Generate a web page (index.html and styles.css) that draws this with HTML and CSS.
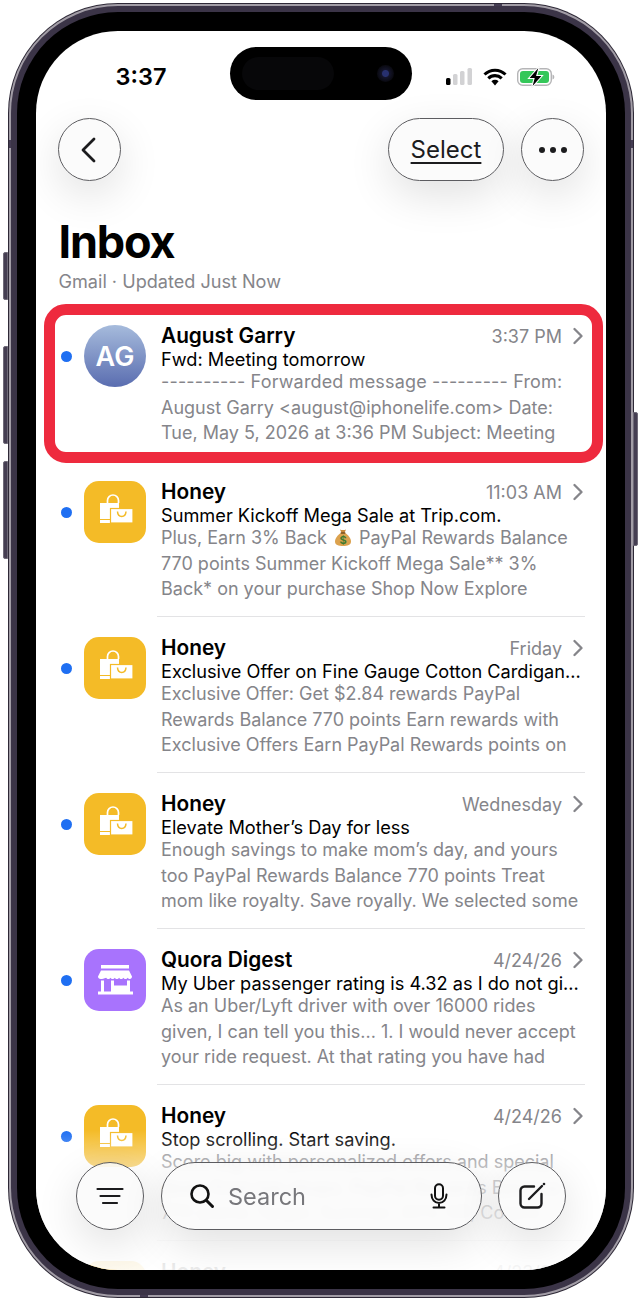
FILE: index.html
```html
<!DOCTYPE html>
<html lang="en">
<head>
<meta charset="utf-8">
<title>Inbox</title>
<link rel="stylesheet" href="styles.css">
</head>
<body>
<svg class="defs" width="0" height="0" aria-hidden="true">
  <defs>
    <symbol id="bags" viewBox="0 0 62 62">
      <path d="M23.500 22v-2.500a5.500 5.500 0 0 1 11 0V22" fill="none" stroke="#fff" stroke-width="1.700"/>
      <path d="M16 22h19v16H16z" fill="#fff"/>
      <rect x="16" y="39" width="12" height="3" fill="#fff"/>
      <rect x="26.500" y="27.500" width="22.500" height="14.500" fill="#fff" stroke="#f4bb27" stroke-width="1.200"/>
      <path d="M33.500 30.500c.3 6.500 8.200 6.500 8.500 0" fill="none" stroke="#f4bb27" stroke-width="1.500"/>
    </symbol>
    <symbol id="store" viewBox="0 0 62 62">
      <rect x="17" y="16" width="28" height="3.500" fill="#fff"/>
      <path d="M17 21.500h28l3 6c0 3-3.200 3-4.300 1.200-1 1.800-3.400 1.800-4.300 0-1 1.800-3.400 1.800-4.300 0-1 1.800-3.400 1.800-4.300 0-1 1.800-3.400 1.800-4.300 0-1 1.800-3.400 1.800-4.300 0C17.200 30.500 14 30.500 14 27.500z" fill="#fff"/>
      <path d="M17 31.500h3v11h7v-11h3v5h13v-5h3v11h3v3H14v-3h3z" fill="#fff"/>
    </symbol>
    <symbol id="chev" viewBox="0 0 12 18">
      <path d="M3.500 2l7 7-7 7" fill="none" stroke="currentColor" stroke-width="2.300" stroke-linecap="round" stroke-linejoin="round"/>
    </symbol>
  </defs>
</svg>

<div class="phone">
  <i class="side side-action"></i>
  <i class="side side-up"></i>
  <i class="side side-down"></i>
  <i class="side side-power"></i>
  <i class="band-mark mark-left"></i>
  <i class="band-mark mark-right"></i>
  <i class="band-mark mark-top"></i>
  <i class="band-mark mark-bottom"></i>
  <div class="ring">
    <div class="band">
      <div class="bezel">
        <div class="screen">
          <div class="island"><span class="island-dim"></span><span class="camera"></span></div>

          <div class="status">
            <span class="time">3:37</span>
            <div class="status-icons">
              <svg class="signal" width="27" height="17" viewBox="0 0 27 17">
                <rect x="0" y="10" width="4.500" height="7" rx="1.500" fill="#000"/>
                <rect x="7" y="6" width="4.500" height="11" rx="1.500" fill="#d2d2d4"/>
                <rect x="14" y="3" width="4.500" height="14" rx="1.500" fill="#d2d2d4"/>
                <rect x="21.500" y="0" width="4.500" height="17" rx="1.500" fill="#d2d2d4"/>
              </svg>
              <svg class="wifi" width="24" height="18" viewBox="0 0 24 18">
                <path d="M1.500 6.500a15 15 0 0 1 21 0M5.300 10.300a9.700 9.700 0 0 1 13.400 0" fill="none" stroke="#000" stroke-width="3.100"/>
                <path d="M8.400 13.200a5.200 5.200 0 0 1 7.200 0L12 17.500z" fill="#000"/>
              </svg>
              <svg class="battery" width="38" height="18" viewBox="0 0 38 18">
                <rect x="0.700" y="0.700" width="33.600" height="16.600" rx="5" fill="#fff" stroke="#b5b5b7" stroke-width="1.400"/>
                <rect x="3" y="3" width="29" height="12" rx="3" fill="#34c759"/>
                <path d="M35.500 6.500c1.400.4 1.800 1.400 1.800 2.500s-.4 2.100-1.800 2.500z" fill="#b5b5b7"/>
                <path d="M22.500-2 11.500 10.500h5.500L14.500 20 25.500 7.500h-5.700z" fill="#000" stroke="#fff" stroke-width="1.100"/>
              </svg>
            </div>
          </div>

          <div class="nav">
            <button class="round" type="button" aria-label="Back">
              <svg width="18" height="28" viewBox="0 0 18 28"><path d="M13 3 2 14l11 11" fill="none" stroke="#1c1c1e" stroke-width="2.800" stroke-linecap="round" stroke-linejoin="round"/></svg>
            </button>
            <div class="nav-right">
              <button class="select" type="button">Select</button>
              <button class="round" type="button" aria-label="More">
                <svg width="30" height="8" viewBox="0 0 30 8"><circle cx="4" cy="4" r="3" fill="#1c1c1e"/><circle cx="15" cy="4" r="3" fill="#1c1c1e"/><circle cx="26" cy="4" r="3" fill="#1c1c1e"/></svg>
              </button>
            </div>
          </div>

          <div class="head">
            <h1 class="title">Inbox</h1>
            <p class="sub">Gmail · Updated Just Now</p>
          </div>

          <div class="list">
            <div class="highlight"></div>

            <article class="row">
              <span class="dot"></span>
              <span class="avatar">AG</span>
              <div class="main">
                <div class="top"><b class="name">August Garry</b><span class="date">3:37 PM</span><svg class="chev"><use href="#chev"/></svg></div>
                <div class="subject">Fwd: Meeting tomorrow</div>
                <div class="line wide">---------- Forwarded message --------- From:</div>
                <div class="line">August Garry &lt;august@iphonelife.com&gt; Date:</div>
                <div class="line">Tue, May 5, 2026 at 3:36 PM Subject: Meeting</div>
              </div>
            </article>

            <article class="row">
              <span class="dot"></span>
              <span class="app honey"><svg width="62" height="62"><use href="#bags"/></svg></span>
              <div class="main">
                <div class="top"><b class="name">Honey</b><span class="date">11:03 AM</span><svg class="chev"><use href="#chev"/></svg></div>
                <div class="subject">Summer Kickoff Mega Sale at Trip.com.</div>
                <div class="line">Plus, Earn 3% Back <svg class="emoji" width="20" height="20" viewBox="0 0 20 20"><path d="M7 2.500c1.500.8 4.500.8 6 0l-1.500 3.500h-3z" fill="#c98a3c"/><path d="M8 6h4c3.500 2 6 5.500 6 8.500 0 3.500-3.500 4.500-8 4.500s-8-1-8-4.500C2 11.500 4.500 8 8 6z" fill="#dca24e"/><rect x="7.500" y="5.300" width="5" height="1.500" rx=".7" fill="#7a4f1d"/><text class="emoji-sign" x="10" y="16.500" text-anchor="middle">$</text></svg> PayPal Rewards Balance</div>
                <div class="line">770 points Summer Kickoff Mega Sale** 3%</div>
                <div class="line">Back* on your purchase Shop Now Explore</div>
              </div>
            </article>

            <article class="row">
              <span class="dot"></span>
              <span class="app honey"><svg width="62" height="62"><use href="#bags"/></svg></span>
              <div class="main">
                <div class="top"><b class="name">Honey</b><span class="date">Friday</span><svg class="chev"><use href="#chev"/></svg></div>
                <div class="subject">Exclusive Offer on Fine Gauge Cotton Cardigan...</div>
                <div class="line">Exclusive Offer: Get $2.84 rewards PayPal</div>
                <div class="line">Rewards Balance 770 points Earn rewards with</div>
                <div class="line">Exclusive Offers Earn PayPal Rewards points on</div>
              </div>
            </article>

            <article class="row">
              <span class="dot"></span>
              <span class="app honey"><svg width="62" height="62"><use href="#bags"/></svg></span>
              <div class="main">
                <div class="top"><b class="name">Honey</b><span class="date">Wednesday</span><svg class="chev"><use href="#chev"/></svg></div>
                <div class="subject">Elevate Mother’s Day for less</div>
                <div class="line">Enough savings to make mom’s day, and yours</div>
                <div class="line">too PayPal Rewards Balance 770 points Treat</div>
                <div class="line">mom like royalty. Save royally. We selected some</div>
              </div>
            </article>

            <article class="row">
              <span class="dot"></span>
              <span class="app quora"><svg width="62" height="62"><use href="#store"/></svg></span>
              <div class="main">
                <div class="top"><b class="name">Quora Digest</b><span class="date">4/24/26</span><svg class="chev"><use href="#chev"/></svg></div>
                <div class="subject">My Uber passenger rating is 4.32 as I do not gi...</div>
                <div class="line">As an Uber/Lyft driver with over 16000 rides</div>
                <div class="line">given, I can tell you this... 1. I would never accept</div>
                <div class="line">your ride request. At that rating you have had</div>
              </div>
            </article>

            <article class="row">
              <span class="dot"></span>
              <span class="app honey"><svg width="62" height="62"><use href="#bags"/></svg></span>
              <div class="main">
                <div class="top"><b class="name">Honey</b><span class="date">4/24/26</span><svg class="chev"><use href="#chev"/></svg></div>
                <div class="subject">Stop scrolling. Start saving.</div>
                <div class="line">Score big with personalized offers and special</div>
                <div class="line">deals from top shops. PayPal Rewards Balance</div>
                <div class="line">770 points Target, Summer, 20% Off, Costco</div>
              </div>
            </article>

            <article class="row">
              <span class="dot"></span>
              <span class="app honey"><svg width="62" height="62"><use href="#bags"/></svg></span>
              <div class="main">
                <div class="top"><b class="name">Honey</b><span class="date">4/23/26</span><svg class="chev"><use href="#chev"/></svg></div>
              </div>
            </article>
          </div>

          <div class="fade"></div>

          <div class="toolbar">
            <button class="round big" type="button" aria-label="Filter">
              <svg width="28" height="18" viewBox="0 0 28 18"><path d="M1.500 2h25M4.500 9h19M7 16h14" fill="none" stroke="#1c1c1e" stroke-width="2.200" stroke-linecap="round"/></svg>
            </button>
            <div class="search">
              <svg width="26" height="26" viewBox="0 0 26 26"><circle cx="11" cy="11" r="8.500" fill="none" stroke="#111" stroke-width="2.600"/><path d="M17.500 17.500l6 6" stroke="#111" stroke-width="3" stroke-linecap="round"/></svg>
              <span class="search-text">Search</span>
              <svg class="mic" width="18" height="26" viewBox="0 0 18 26"><rect x="5" y="1.200" width="8" height="15.500" rx="4" fill="none" stroke="#111" stroke-width="2"/><path d="M1.500 11.500c0 5 3.200 8.500 7.500 8.500s7.500-3.500 7.500-8.500M9 20v4M3.500 24.500h11" fill="none" stroke="#111" stroke-width="2" stroke-linecap="round"/></svg>
            </div>
            <button class="round big compose" type="button" aria-label="Compose">
              <svg width="28" height="28" viewBox="0 0 28 28"><path d="M16 4.500H6.500A4 4 0 0 0 2.500 8.500v13a4 4 0 0 0 4 4h13a4 4 0 0 0 4-4V12" fill="none" stroke="#1c1c1e" stroke-width="2.400" stroke-linecap="round"/><path d="M11 17 24 4" stroke="#1c1c1e" stroke-width="2.400" stroke-linecap="round"/><circle cx="26" cy="2" r="1.300" fill="#1c1c1e"/></svg>
            </button>
          </div>
        </div>
      </div>
    </div>
  </div>
</div>
</body>
</html>
```

FILE: styles.css
```css
* { box-sizing: border-box; }

html, body {
  margin: 0;
  height: 1301px;
  overflow: hidden;
  background: #fff;
}

body {
  padding: 3px 8px;
  font-family: Inter, "Liberation Sans", sans-serif;
  color: #000;
}

.defs { position: absolute; }

.phone {
  position: relative;
  width: 626px;
  height: 1295px;
  padding: 1px;
  border-radius: 110px;
  background: #2d2836;
}

.ring {
  height: 100%;
  padding: 2px;
  border-radius: 109px;
  background: #a29da6;
}

.band {
  height: 100%;
  padding: 6px;
  border-radius: 107px;
  background: #3b3447;
}

.bezel {
  height: 100%;
  padding: 19px;
  border-radius: 101px;
  background: #000;
}

.screen {
  position: relative;
  height: 100%;
  overflow: hidden;
  border-radius: 82px;
  background: #fff;
}

.side {
  position: absolute;
  width: 5px;
  background: #453e52;
  border: 1px solid #6f6a78;
  border-radius: 2px 0 0 2px;
  left: -5px;
}
.side-action { top: 249px; height: 48px; }
.side-up { top: 343px; height: 98px; }
.side-down { top: 458px; height: 98px; }
.side-power {
  left: auto;
  right: -4px;
  top: 409px;
  height: 134px;
  border-radius: 0 2px 2px 0;
}

.band-mark { position: absolute; background: #443c52; }
.mark-left { left: 1px; top: 137px; width: 2px; height: 8px; }
.mark-right { right: 1px; top: 137px; width: 2px; height: 8px; }
.mark-top { top: 1px; left: 486px; width: 8px; height: 2px; }
.mark-bottom { bottom: 1px; left: 132px; width: 8px; height: 2px; }

.island {
  position: absolute;
  left: 194px;
  top: 16px;
  width: 182px;
  height: 53px;
  border-radius: 27px;
  background: #000;
  z-index: 5;
}
.island-dim {
  position: absolute;
  left: 12px;
  top: 10px;
  width: 92px;
  height: 33px;
  border-radius: 17px;
  background: #070709;
}
.camera {
  position: absolute;
  left: 147px;
  top: 18px;
  width: 17px;
  height: 17px;
  border-radius: 50%;
  background: radial-gradient(circle, #27306e 0 3px, #14152b 4px, #0a0a12 8px);
}

.status {
  display: flex;
  justify-content: space-between;
  height: 87px;
  padding: 32px 51px 0 79.500px;
}
.time {
  font-size: 23.500px;
  line-height: 28px;
  font-weight: 600;
}
.status-icons {
  display: flex;
  align-items: flex-start;
  gap: 10px;
  padding-top: 5px;
}
.battery { overflow: visible; }

.nav {
  display: flex;
  justify-content: space-between;
  padding: 0 22px;
}
.nav-right { display: flex; gap: 17px; }

.round, .select, .search {
  border: 1.300px solid #5c5c60;
  background: rgba(250, 250, 250, .86);
  box-shadow: 0 14px 44px rgba(0, 0, 0, .12);
}

.round {
  display: flex;
  align-items: center;
  justify-content: center;
  width: 63px;
  height: 63px;
  padding: 0;
  border-radius: 50%;
}

.select {
  width: 116px;
  height: 63px;
  padding: 0;
  border-radius: 32px;
  font: 400 24px/30px Inter, "Liberation Sans", sans-serif;
  color: #1c1c1e;
  text-decoration: underline;
  text-underline-offset: 4px;
  text-decoration-thickness: 2px;
}

.head { padding: 33px 0 11px 22.500px; }
.title {
  margin: 0;
  font-size: 45px;
  line-height: 55px;
  font-weight: 700;
  letter-spacing: -1.200px;
}
.sub {
  margin: 0;
  font-size: 18.100px;
  line-height: 24px;
  color: #85858a;
}

.list { position: relative; }

.highlight {
  position: absolute;
  left: 8px;
  top: 0;
  width: 559px;
  height: 159px;
  border: 11.500px solid #ee2a3e;
  border-radius: 22px;
  z-index: 2;
}

.row {
  display: grid;
  grid-template-columns: 23px 73px 1fr;
  height: 156px;
  padding: 0 21px 0 25px;
}

.dot {
  width: 11px;
  height: 11px;
  margin-top: 47px;
  border-radius: 50%;
  background: #1f6ff2;
}

.avatar, .app {
  display: flex;
  align-items: center;
  justify-content: center;
  width: 62px;
  height: 62px;
  margin-top: 21px;
}
.avatar {
  border-radius: 50%;
  background: linear-gradient(#a6bbdc, #5a6db0);
  color: #fff;
  font-size: 27px;
  font-weight: 600;
}
.app { border-radius: 15px; }
.honey { background: #f4bb27; }
.quora { background: #a873fd; }

.main {
  margin-bottom: -1px;
  padding: 19px 2px 0 4px;
  border-bottom: 1px solid #e3e3e5;
  min-width: 0;
}
.top {
  display: flex;
  align-items: center;
  height: 24px;
}
.name {
  flex: 1;
  font-size: 20.800px;
  font-weight: 600;
}
.date {
  margin-top: 2px;
  font-size: 18px;
  color: #85858a;
}
.chev {
  width: 12px;
  height: 18px;
  margin: 2px 0 0 9px;
  color: #85858a;
}
.subject {
  margin-top: 2px;
  height: 20px;
  font-size: 18.200px;
  line-height: 21px;
  white-space: nowrap;
}
.line {
  height: 25.500px;
  font-size: 18px;
  line-height: 25.500px;
  color: #85858a;
  white-space: nowrap;
}
.wide { letter-spacing: .16px; }
.emoji { vertical-align: -3px; margin: 0 1px; }
.emoji-sign { font-size: 11px; font-weight: 700; fill: #3f7a2e; }

.fade {
  position: absolute;
  left: 0;
  right: 0;
  bottom: 0;
  height: 140px;
  background: linear-gradient(rgba(255,255,255,0) 0, rgba(255,255,255,.55) 30%, rgba(255,255,255,.8) 65%, rgba(255,255,255,.93) 100%);
  z-index: 3;
}

.toolbar {
  position: absolute;
  left: 40px;
  top: 1131px;
  display: flex;
  z-index: 4;
}
.big { width: 68px; height: 68px; }
.search {
  display: flex;
  align-items: center;
  width: 321px;
  height: 68px;
  margin-left: 17px;
  padding: 0 33px 0 27px;
  border-radius: 34px;
  backdrop-filter: blur(4px);
}
.search-text {
  flex: 1;
  margin-left: 13px;
  font-size: 23.500px;
  color: #77777b;
}
.compose { margin-left: 16px; backdrop-filter: blur(4px); }
```
